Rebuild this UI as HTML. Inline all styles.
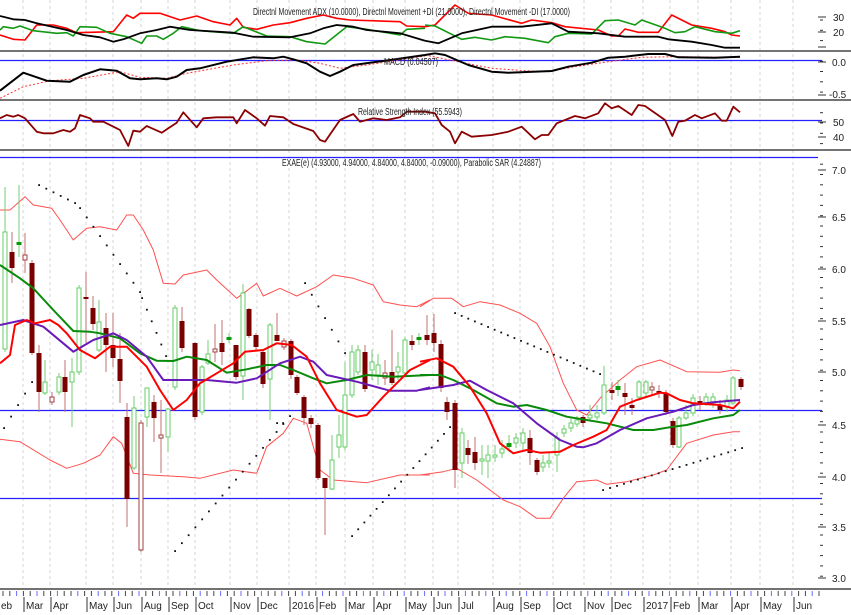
<!DOCTYPE html>
<html><head><meta charset="utf-8"><style>
html,body{margin:0;padding:0;background:#fff;width:851px;height:615px;overflow:hidden}
svg{display:block}
text{font-family:"Liberation Sans",sans-serif;font-size:10px;fill:#222}
</style></head><body>
<svg id="s" width="851" height="615" xmlns="http://www.w3.org/2000/svg">
<g id="grid"></g>
<line x1="0" y1="51" x2="851" y2="51" stroke="#222" stroke-width="1.3"/>
<line x1="0" y1="100" x2="851" y2="100" stroke="#222" stroke-width="1.3"/>
<line x1="0" y1="150" x2="851" y2="150" stroke="#222" stroke-width="1.3"/>
<line x1="0" y1="589" x2="851" y2="589" stroke="#444" stroke-width="1.5"/>
<line x1="0" y1="60.5" x2="822" y2="60.5" stroke="#2222ff" stroke-width="1.2"/>
<line x1="0" y1="120.5" x2="822" y2="120.5" stroke="#2222ff" stroke-width="1.2"/>
<line x1="0" y1="157.5" x2="818" y2="157.5" stroke="#2222ff" stroke-width="1.2"/>
<line x1="0" y1="410.5" x2="822" y2="410.5" stroke="#2222ff" stroke-width="1.2"/>
<line x1="0" y1="498.5" x2="822" y2="498.5" stroke="#2222ff" stroke-width="1.2"/>
<g id="draw"></g>
<text x="253" y="15" textLength="317" lengthAdjust="spacingAndGlyphs" font-size="11">Directnl Movement ADX (10.0000), Directnl Movement +DI (21.0000), Directnl Movement -DI (17.0000)</text>
<text x="384" y="65" textLength="54" lengthAdjust="spacingAndGlyphs" font-size="11">MACD (0.04507)</text>
<text x="358" y="115" textLength="104" lengthAdjust="spacingAndGlyphs" font-size="11">Relative Strength Index (55.5943)</text>
<text x="282" y="166" textLength="259" lengthAdjust="spacingAndGlyphs" font-size="11">EXAE(e) (4.93000, 4.94000, 4.84000, 4.84000, -0.09000), Parabolic SAR (4.24887)</text>
<g font-size="10">
<text x="833" y="21">30</text><text x="833" y="36">20</text>
<text x="832" y="66">0.0</text><text x="829" y="98">-0.5</text>
<text x="833" y="126">50</text><text x="833" y="141">40</text>
<text x="832" y="174">7.0</text><text x="832" y="221">6.5</text><text x="832" y="273">6.0</text>
<text x="832" y="325">5.5</text><text x="832" y="376">5.0</text><text x="832" y="429">4.5</text>
<text x="832" y="481">4.0</text><text x="832" y="531">3.5</text><text x="832" y="582">3.0</text>
</g>
<g id="months" font-size="10"></g>
</svg>
<script>
var NS="http://www.w3.org/2000/svg";
function el(p,t,a){var e=document.createElementNS(NS,t);for(var k in a)e.setAttribute(k,a[k]);p.appendChild(e);return e;}
var D=document.getElementById('draw'),G=document.getElementById('grid'),M=document.getElementById('months');
var mon=[["eb",0],["Mar",25],["Apr",52],["May",88],["Jun",115],["Aug",143],["Sep",170],["Oct",197],["Nov",232],["Dec",259],["2016",291],["Feb",318],["Mar",347],["Apr",375],["May",407],["Jun",435],["Jul",460],["Aug",495],["Sep",522],["Oct",555],["Nov",586],["Dec",613],["2017",645],["Feb",672],["Mar",700],["Apr",733],["May",762],["Jun",795]];
mon.forEach(function(m){
 if(m[1]>0){el(G,'line',{x1:m[1]-2,y1:0,x2:m[1]-2,y2:588,stroke:'#d4d4d4','stroke-dasharray':'3,3'});}
 el(M,'line',{x1:m[1]-1,y1:597,x2:m[1]-1,y2:612,stroke:'#333'});
 var t=el(M,'text',{x:m[1]+1,y:609});t.textContent=m[0];
});
var k=0;for(var x=3;x<820;x+=6.8){k++;el(M,'line',{x1:x,y1:591,x2:x,y2:596,stroke:(k%3==0?'#6a6aff':'#444'),'stroke-width':1});}
for(var y=20;y<585;y+=10.3){if(y>48&&y<55||y>97&&y<104||y>147&&y<160)continue;el(G,'line',{x1:820,y1:y,x2:823,y2:y,stroke:'#333'});}
[17,32,47,62,95,122,137,170,217,269,321,372,425,477,527,578].forEach(function(y){el(G,'line',{x1:818,y1:y,x2:826,y2:y,stroke:'#333'});});
function pl(pts,ox,oy,col,w,dash){var s=pts.map(function(p){return (ox+p[0]/3).toFixed(1)+','+(oy+p[1]/3).toFixed(1)}).join(' ');var a={points:s,fill:'none',stroke:col,'stroke-width':w,'stroke-linejoin':'round'};if(dash)a['stroke-dasharray']=dash;el(D,'polyline',a);}
function two(a,b,col,w,dash,oy){pl(a,0,oy,col,w,dash);pl(b,425,oy,col,w,dash);}
two([[0,105],[40,118],[75,120],[110,75],[160,75],[200,85],[230,98],[340,95],[380,45],[400,55],[420,40],[480,40],[540,60],[590,48],[640,65],[690,75],[710,55],[730,82],[770,88],[820,75],[870,68],[920,55],[970,45],[1010,55],[1050,60],[1200,65],[1220,78],[1275,80]],
[[0,80],[30,75],[90,15],[130,40],[200,45],[290,70],[320,60],[380,68],[420,80],[520,90],[560,108],[580,108],[600,87],[640,97],[700,97],[740,45],[800,75],[860,85],[900,95],[920,105],[945,108]],'#f00',1.6,null,0);
two([[0,90],[10,80],[40,85],[60,78],[100,92],[170,100],[200,98],[220,108],[240,80],[290,82],[330,100],[380,110],[425,130],[440,108],[470,108],[490,118],[520,100],[545,80],[600,92],[700,100],[730,80],[800,108],[870,110],[920,125],[975,132],[1040,80],[1100,88],[1200,105],[1220,88],[1275,85]],
[[0,75],[30,78],[110,118],[150,112],[200,120],[240,110],[300,115],[370,128],[390,110],[430,100],[500,102],[540,62],[580,60],[630,75],[650,60],[720,85],[750,98],[780,95],[810,80],[870,95],[920,100],[945,92]],'#129912',1.6,null,0);
two([[0,48],[40,58],[75,60],[110,70],[200,90],[250,105],[300,112],[340,125],[370,118],[420,100],[470,90],[510,80],[570,90],[700,98],[760,110],[870,112],[930,100],[970,85],[1010,75],[1060,80],[1100,90],[1200,100],[1275,122]],
[[0,122],[40,130],[110,100],[200,80],[290,80],[380,70],[430,95],[520,100],[600,110],[700,110],[730,118],[800,125],[860,135],[900,143],[945,143]],'#000',1.8,null,0);
two([[0,295],[70,260],[150,242],[250,235],[360,215],[420,232],[500,235],[560,220],[700,195],[800,182],[890,180],[960,190],[1020,205],[1100,195],[1275,168]],
[[0,165],[100,185],[200,205],[300,212],[370,215],[450,200],[550,185],[650,172],[750,170],[945,172]],'#f33',1,'2,2',0);
two([[0,272],[70,218],[140,242],[210,245],[250,225],[300,208],[350,212],[390,235],[420,238],[470,235],[500,238],[530,230],[560,210],[600,205],[680,185],[760,172],[820,175],[850,170],[880,178],[920,190],[960,215],[990,228],[1020,215],[1060,195],[1150,183],[1275,165]],
[[0,165],[30,160],[60,165],[130,195],[200,215],[250,218],[380,213],[430,200],[500,188],[550,173],[600,170],[670,162],[720,162],[760,172],[870,173],[945,170]],'#000',2,null,0);
two([[0,355],[20,345],[40,350],[55,345],[75,355],[110,395],[130,400],[160,400],[190,390],[210,395],[225,385],[240,345],[270,355],[280,365],[310,365],[350,385],[360,390],[385,438],[400,392],[420,395],[440,378],[485,398],[530,368],[550,337],[590,382],[610,355],[650,352],[700,352],[710,370],[735,330],[770,355],[795,377],[810,348],[850,352],[880,372],[940,393],[960,420],[975,425],[1020,360],[1060,342],[1080,365],[1120,355],[1160,360],[1200,352],[1220,335],[1275,335]],
[[0,335],[30,340],[50,375],[75,395],[90,430],[110,395],[140,410],[200,405],[250,395],[290,380],[330,418],[350,405],[370,405],[395,370],[450,348],[480,355],[520,340],[540,310],[560,325],[580,318],[620,345],[640,315],[660,318],[720,360],[742,408],[760,365],[780,362],[810,345],[830,355],[870,340],[890,362],[905,362],[925,320],[945,337]],'#8b0000',1.8,null,0);
function two2(a,b,col,w){pl(a,0,170,col,w);pl(b,420,170,col,w);}
two2([[0,120],[30,120],[75,80],[100,105],[155,115],[180,150],[220,210],[260,175],[300,170],[350,180],[380,135],[400,135],[430,180],[460,240],[490,340],[525,342],[550,315],[620,300],[650,330],[710,385],[770,340],[790,378],[840,355],[890,378],[950,350],[1000,315],[1060,325],[1120,345],[1150,395],[1200,405],[1250,410],[1290,390]],
[[0,410],[40,385],[95,385],[130,410],[180,395],[240,405],[300,430],[350,460],[390,530],[430,640],[470,720],[500,735],[540,685],[600,630],[650,590],[720,570],[800,605],[900,607],[940,600],[960,602]],'#ff5050',1);
two2([[0,808],[60,815],[150,870],[200,895],[250,880],[300,855],[340,800],[365,820],[400,910],[450,915],[550,920],[600,925],[700,900],[770,910],[800,830],[850,790],[880,745],[920,760],[960,900],[1000,930],[1100,938],[1200,915],[1290,915]],
[[0,915],[70,905],[110,895],[170,930],[250,990],[300,1010],[350,1045],[390,1045],[430,985],[470,935],[530,930],[560,943],[620,935],[700,915],[740,900],[800,820],[880,795],[940,785],[960,785]],'#ff5050',1);
function dots(x1,y1,x2,y2,n){for(var i=0;i<=n;i++){var t=i/n;el(D,'rect',{x:x1+(x2-x1)*t-0.8,y:y1+(y2-y1)*t-0.8,width:1.8,height:1.8,fill:'#111'});}}
dots(39,185,75,203,5);dots(80,208,140,292,9);dots(142,298,166,356,5);
dots(4,428,32,382,4);
dots(175,551,290,416,17);dots(277,423,283,423,1);
dots(305,283,345,353,6);
dots(352,536,450,427,16);
dots(455,313,600,374,22);
dots(603,490,742,448,20);
var C=[[5,232,349,187,352,'g'],[12,252,268,232,283,'r'],[19,242,245,185,257,'G'],[25,255,260,233,273,'h'],[32,263,353,260,355,'r'],[39,353,392,345,412,'r'],[45,382,393,360,395,'g'],[52,397,402,392,405,'h'],[59,377,392,373,395,'g'],[65,377,392,360,412,'r'],[72,372,382,358,427,'g'],[79,288,372,285,375,'g'],[86,297,299,272,343,'r'],[93,308,324,296,330,'r'],[99,322,350,300,352,'g'],[106,328,345,313,372,'r'],[113,345,358,313,367,'r'],[120,359,381,333,403,'r'],[127,417,499,403,527,'r'],[134,408,468,396,470,'g'],[141,423,550,420,552,'h'],[147,388,417,400,427,'g'],[154,402,418,395,442,'r'],[161,435,438,400,473,'h'],[168,409,437,408,452,'g'],[175,308,387,305,390,'g'],[182,321,348,307,352,'r'],[195,343,417,342,420,'r'],[202,367,412,365,415,'g'],[208,354,363,340,365,'g'],[215,349,352,324,362,'h'],[222,343,352,320,365,'r'],[229,337,340,333,343,'G'],[236,345,377,345,380,'r'],[243,293,376,284,400,'g'],[249,309,336,308,338,'r'],[256,335,347,333,350,'r'],[263,352,384,350,388,'r'],[270,325,379,323,420,'g'],[277,335,341,313,341,'r'],[284,341,347,338,350,'h'],[291,341,375,339,379,'r'],[297,377,393,375,395,'r'],[304,397,418,395,425,'r'],[311,418,424,415,428,'r'],[318,425,478,423,480,'r'],[325,478,488,478,535,'r'],[332,460,489,435,490,'g'],[339,435,447,415,458,'g'],[345,395,447,362,450,'g'],[352,352,395,345,398,'g'],[358,350,372,345,375,'g'],[365,352,389,345,392,'r'],[372,362,370,350,380,'g'],[378,365,375,354,385,'g'],[385,373,378,360,385,'h'],[392,372,383,330,385,'r'],[398,367,372,352,380,'g'],[405,340,373,337,375,'g'],[412,341,345,335,350,'r'],[419,337,340,333,345,'G'],
[427,335,340,315,345,'r'],[434,333,343,314,352,'r'],[441,344,388,340,392,'r'],[447,402,412,397,420,'r'],[455,403,470,400,488,'r'],[462,433,463,428,478,'g'],[468,448,455,440,464,'r'],[475,452,463,437,470,'r'],[482,459,461,445,475,'g'],[488,455,461,445,478,'g'],[495,455,457,445,462,'g'],[502,449,453,440,458,'g'],[509,443,447,435,452,'G'],[516,438,443,433,448,'g'],[523,433,443,428,450,'g'],[530,438,453,430,465,'r'],[537,460,472,458,475,'r'],[543,463,467,455,472,'g'],[549,461,463,452,468,'g'],[557,438,455,432,472,'g'],[564,429,433,425,437,'g'],[571,423,428,418,432,'g'],[577,420,424,416,427,'g'],[583,417,423,415,427,'r'],[590,415,418,405,420,'g'],[597,413,417,405,420,'g'],[604,385,413,366,415,'g'],[612,390,393,382,400,'r'],[618,386,390,380,396,'G'],[625,393,397,383,415,'r'],[632,405,408,398,415,'r'],[639,382,397,380,400,'g'],[646,382,393,380,397,'g'],[652,387,390,382,395,'h'],[659,391,393,385,398,'r'],[666,393,412,390,415,'r'],[673,421,445,418,448,'r'],[679,418,447,416,448,'g'],[686,413,418,405,420,'g'],[693,398,413,394,416,'g'],[700,401,405,396,410,'r'],[706,397,403,393,406,'g'],[713,397,403,393,408,'g'],[720,405,410,400,414,'r'],[727,400,407,395,412,'g'],[733,378,403,376,405,'g'],[741,379,387,377,390,'r']];
C.forEach(function(c){
 var x=c[0],t=c[1],b=c[2],ty=c[5];
 var red=(ty=='r'||ty=='h');
 el(D,'line',{x1:x,y1:c[3],x2:x,y2:c[4],stroke:red?'#c07070':'#77cc77','stroke-width':1});
 var h=Math.max(b-t,2);
 if(ty=='r')el(D,'rect',{x:x-2.5,y:t,width:5,height:h,fill:'#7a0000'});
 else if(ty=='G')el(D,'rect',{x:x-2.5,y:t,width:5,height:h,fill:'#089a08'});
 else if(ty=='h')el(D,'rect',{x:x-2,y:t,width:4,height:h,fill:'#fff',stroke:'#a04040','stroke-width':1});
 else el(D,'rect',{x:x-2,y:t,width:4,height:h,fill:'#fff',stroke:'#66cc66','stroke-width':1});
});
two2([[0,285],[60,325],[100,355],[160,420],[220,483],[270,485],[300,490],[360,505],[420,550],[470,572],[520,573],[560,560],[620,570],[680,608],[740,598],[800,585],[840,585],[880,600],[940,625],[980,640],[1040,630],[1100,615],[1180,620],[1290,615]],
[[0,615],[60,615],[100,630],[160,660],[230,700],[280,710],[320,705],[380,720],[440,740],[500,750],[560,760],[640,780],[700,780],[760,770],[800,765],[880,745],[940,735],[960,720]],'#0a8a0a',2);
two2([[0,465],[70,450],[130,470],[220,545],[280,510],[340,490],[380,510],[440,560],[490,630],[550,630],[620,630],[710,638],[770,625],[840,580],[900,560],[940,575],[980,615],[1070,635],[1170,662],[1250,662],[1290,652]],
[[0,660],[100,645],[150,632],[200,660],[280,700],[350,760],[420,810],[470,830],[490,832],[530,820],[600,780],[680,745],[760,725],[820,705],[880,697],[960,690]],'#6a1ab8',2);
two2([[0,580],[30,555],[45,465],[80,450],[105,460],[150,450],[175,465],[200,490],[240,540],[285,565],[330,530],[380,530],[410,560],[440,590],[480,660],[520,720],[560,690],[600,640],[650,610],[700,580],[735,545],[790,540],[830,520],[875,525],[920,560],[960,640],[1010,720],[1070,740],[1100,735],[1150,680],[1230,600],[1290,570]],
[[0,575],[50,565],[100,590],[150,650],[200,730],[240,820],[280,850],[320,840],[360,848],[420,845],[460,825],[520,800],[560,780],[600,710],[650,690],[720,668],[740,670],[780,690],[820,700],[900,705],[940,715],[960,695]],'#f00',2);
</script>
</body></html>
